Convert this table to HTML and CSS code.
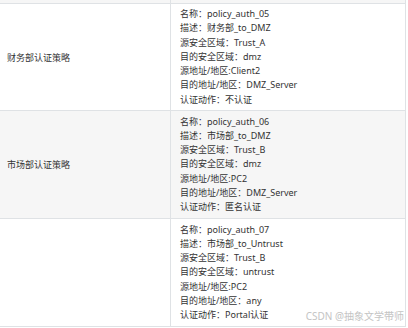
FILE: index.html
```html
<!DOCTYPE html>
<html lang="zh-CN">
<head>
<meta charset="utf-8">
<title>认证策略</title>
<link rel="stylesheet" href="styles.css">
</head>
<body>
<div class="page">
  <div class="row stub"><div class="cell left"></div><div class="cell right"></div></div>
  <div class="row first">
    <div class="cell left">财务部认证策略</div>
    <div class="cell right">
      <div class="line">名称：policy_auth_05</div>
      <div class="line">描述：财务部_to_DMZ</div>
      <div class="line">源安全区域：Trust_A</div>
      <div class="line">目的安全区域：dmz</div>
      <div class="line">源地址/地区:Client2</div>
      <div class="line">目的地址/地区：DMZ_Server</div>
      <div class="line">认证动作：不认证</div>
    </div>
  </div>
  <div class="row alt">
    <div class="cell left">市场部认证策略</div>
    <div class="cell right">
      <div class="line">名称：policy_auth_06</div>
      <div class="line">描述：市场部_to_DMZ</div>
      <div class="line">源安全区域：Trust_B</div>
      <div class="line">目的安全区域：dmz</div>
      <div class="line">源地址/地区:PC2</div>
      <div class="line">目的地址/地区：DMZ_Server</div>
      <div class="line">认证动作：匿名认证</div>
    </div>
  </div>
  <div class="row">
    <div class="cell left"></div>
    <div class="cell right">
      <div class="line">名称：policy_auth_07</div>
      <div class="line">描述：市场部_to_Untrust</div>
      <div class="line">源安全区域：Trust_B</div>
      <div class="line">目的安全区域：untrust</div>
      <div class="line">源地址/地区:PC2</div>
      <div class="line">目的地址/地区：any</div>
      <div class="line">认证动作：Portal认证</div>
    </div>
  </div>
  <div class="watermark">CSDN @抽象文学带师</div>
</div>
</body>
</html>
```

FILE: styles.css
```css
* { box-sizing: border-box; }
html, body { margin: 0; padding: 0; background: #ffffff; }
body {
  font-family: "Noto Sans", "Noto Sans CJK SC", sans-serif;
  font-size: 9px;
  color: #333333;
}
.page {
  position: relative;
  width: 408px;
  height: 328px;
  overflow: hidden;
}
.row {
  display: grid;
  grid-template-columns: 171px 235px;
  width: 406px;
  height: 108px;
  border-bottom: 1px solid #dfe2e5;
}
.row.first { height: 107px; }
.row.stub {
  height: 4px;
  background: #f6f6f6;
}
.row.alt { background: #f6f6f6; }
.cell {
  display: flex;
  flex-direction: column;
  justify-content: center;
}
.cell.left {
  border-right: 1px solid #dfe2e5;
  padding-left: 7px;
}
.cell.right {
  border-right: 1px solid #dfe2e5;
  padding-left: 9px;
}
.line {
  line-height: 14.2px;
  white-space: nowrap;
}
.watermark {
  position: absolute;
  right: 4px;
  top: 309px;
  font-size: 10px;
  line-height: 14px;
  color: #c4c4c4;
  white-space: nowrap;
}
```
